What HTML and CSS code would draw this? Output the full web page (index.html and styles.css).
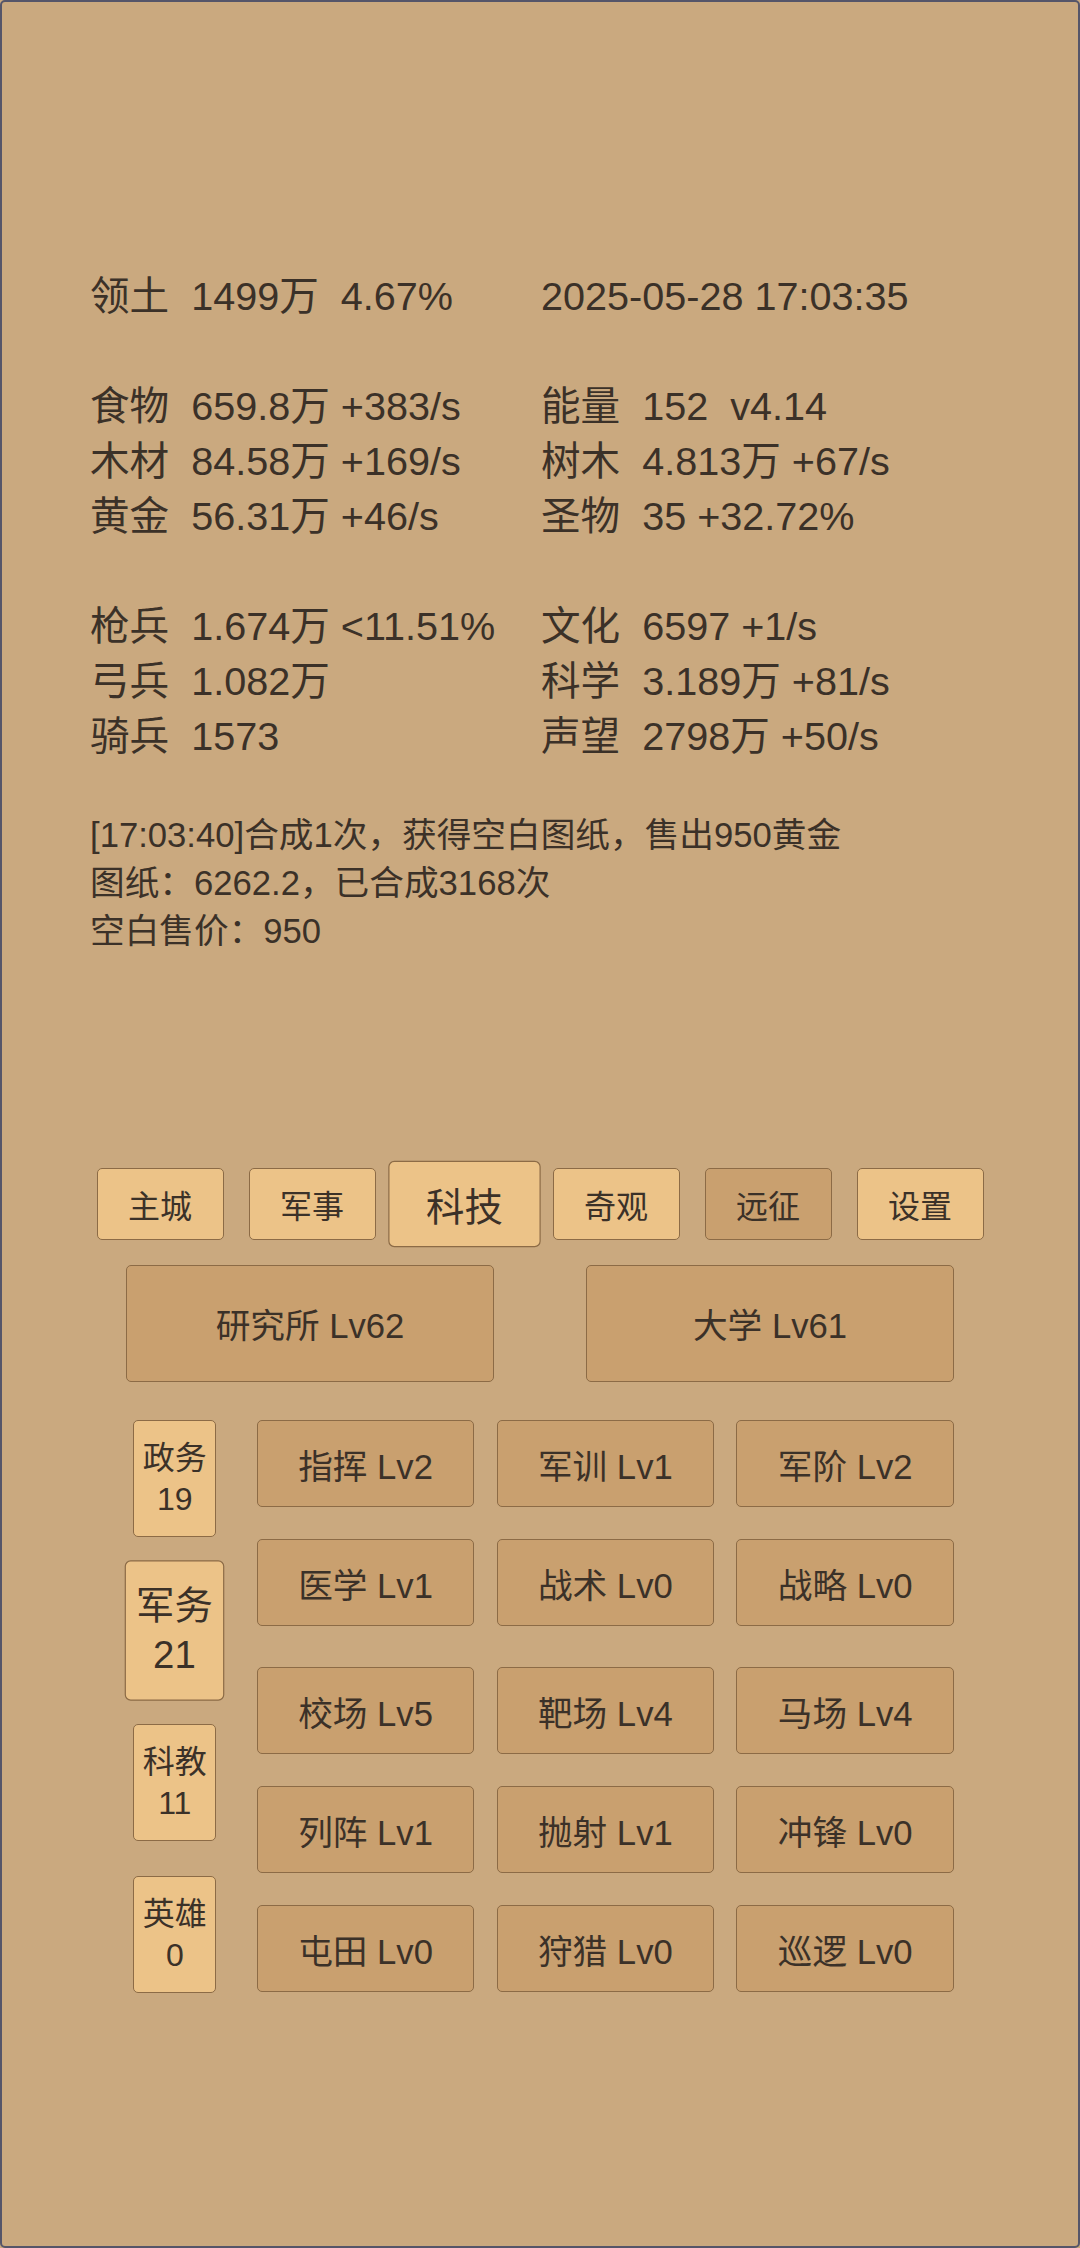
FILE: index.html
```html
<!DOCTYPE html>
<html lang="zh-CN">
<head>
<meta charset="utf-8">
<title>游戏</title>
<link rel="stylesheet" href="styles.css">
</head>
<body>
<div class="screen">
  <section class="stats">
    <div class="cell">领土  1499万  4.67%</div><div class="cell">2025-05-28 17:03:35</div>
    <div class="cell"></div><div class="cell"></div>
    <div class="cell">食物  659.8万 +383/s</div><div class="cell">能量  152  v4.14</div>
    <div class="cell">木材  84.58万 +169/s</div><div class="cell">树木  4.813万 +67/s</div>
    <div class="cell">黄金  56.31万 +46/s</div><div class="cell">圣物  35 +32.72%</div>
    <div class="cell"></div><div class="cell"></div>
    <div class="cell">枪兵  1.674万 &lt;11.51%</div><div class="cell">文化  6597 +1/s</div>
    <div class="cell">弓兵  1.082万</div><div class="cell">科学  3.189万 +81/s</div>
    <div class="cell">骑兵  1573</div><div class="cell">声望  2798万 +50/s</div>
  </section>

  <section class="log">
    <p class="log-line">[17:03:40]合成1次，获得空白图纸，售出950黄金</p>
    <p class="log-line">图纸：6262.2，已合成3168次</p>
    <p class="log-line">空白售价：950</p>
  </section>

  <nav class="tabs">
    <button class="btn tab">主城</button>
    <button class="btn tab">军事</button>
    <button class="btn tab active">科技</button>
    <button class="btn tab">奇观</button>
    <button class="btn tab dark">远征</button>
    <button class="btn tab">设置</button>
  </nav>

  <div class="buildings">
    <button class="btn dark building">研究所 Lv62</button>
    <button class="btn dark building">大学 Lv61</button>
  </div>

  <div class="tech">
    <div class="cats">
      <button class="btn cat">政务<br>19</button>
      <button class="btn cat active">军务<br>21</button>
      <button class="btn cat">科教<br>11</button>
      <button class="btn cat">英雄<br>0</button>
    </div>
    <div class="tech-groups">
      <div class="tech-grid">
        <button class="btn dark item">指挥 Lv2</button>
        <button class="btn dark item">军训 Lv1</button>
        <button class="btn dark item">军阶 Lv2</button>
        <button class="btn dark item">医学 Lv1</button>
        <button class="btn dark item">战术 Lv0</button>
        <button class="btn dark item">战略 Lv0</button>
      </div>
      <div class="tech-grid">
        <button class="btn dark item">校场 Lv5</button>
        <button class="btn dark item">靶场 Lv4</button>
        <button class="btn dark item">马场 Lv4</button>
        <button class="btn dark item">列阵 Lv1</button>
        <button class="btn dark item">抛射 Lv1</button>
        <button class="btn dark item">冲锋 Lv0</button>
        <button class="btn dark item">屯田 Lv0</button>
        <button class="btn dark item">狩猎 Lv0</button>
        <button class="btn dark item">巡逻 Lv0</button>
      </div>
    </div>
  </div>
</div>
</body>
</html>
```

FILE: styles.css
```css
* {
  box-sizing: border-box;
}

html, body {
  margin: 0;
  padding: 0;
  background: #caa97f;
}

body {
  font-family: "Liberation Sans", "Noto Sans CJK SC", sans-serif;
  color: #3b3128;
}

.screen {
  width: 1080px;
  height: 2248px;
  border: 2px solid #555569;
  border-radius: 5px;
  background: #caa97f;
  overflow: hidden;
}

/* ---------- stats ---------- */
.stats {
  display: grid;
  grid-template-columns: 451px 1fr;
  grid-auto-rows: 55px;
  padding: 267.4px 0 0 88px;
  font-size: 39.6px;
  line-height: 55px;
}

.cell {
  white-space: pre;
}

/* ---------- log ---------- */
.log {
  margin-top: 46.25px;
  padding-left: 88px;
  font-size: 34.67px;
  line-height: 48.3px;
}

.log-line {
  margin: 0;
  white-space: pre;
}

/* ---------- buttons ---------- */
.btn {
  font-family: inherit;
  color: #3b3128;
  background: #ecc388;
  border: 1.5px solid #8c6b46;
  border-radius: 5px;
  padding: 0;
  margin: 0;
  display: flex;
  align-items: center;
  justify-content: center;
  text-align: center;
}

.btn.dark {
  background: #c9a06f;
}

.btn.active {
  transform: scale(1.2);
}

/* ---------- tabs ---------- */
.tabs {
  display: flex;
  justify-content: center;
  gap: 25px;
  margin-top: 212.4px;
}

.tab {
  width: 127px;
  height: 72px;
  font-size: 32px;
}

/* ---------- buildings ---------- */
.buildings {
  display: flex;
  justify-content: center;
  gap: 92px;
  margin-top: 25px;
}

.building {
  width: 368px;
  height: 117px;
  font-size: 34.67px;
}

/* ---------- tech ---------- */
.tech {
  display: flex;
  align-items: flex-start;
  gap: 40.5px;
  margin-top: 38.5px;
  padding-left: 131.3px;
}

.cats {
  display: flex;
  flex-direction: column;
  gap: 35px;
}

.cat {
  width: 83px;
  height: 117px;
  font-size: 32px;
  line-height: 41px;
}

.tech-groups {
  display: flex;
  flex-direction: column;
  gap: 41px;
}

.tech-grid {
  display: grid;
  grid-template-columns: repeat(3, 217.5px);
  grid-auto-rows: 87px;
  column-gap: 22.3px;
  row-gap: 32px;
}

.item {
  font-size: 34.67px;
}
```
